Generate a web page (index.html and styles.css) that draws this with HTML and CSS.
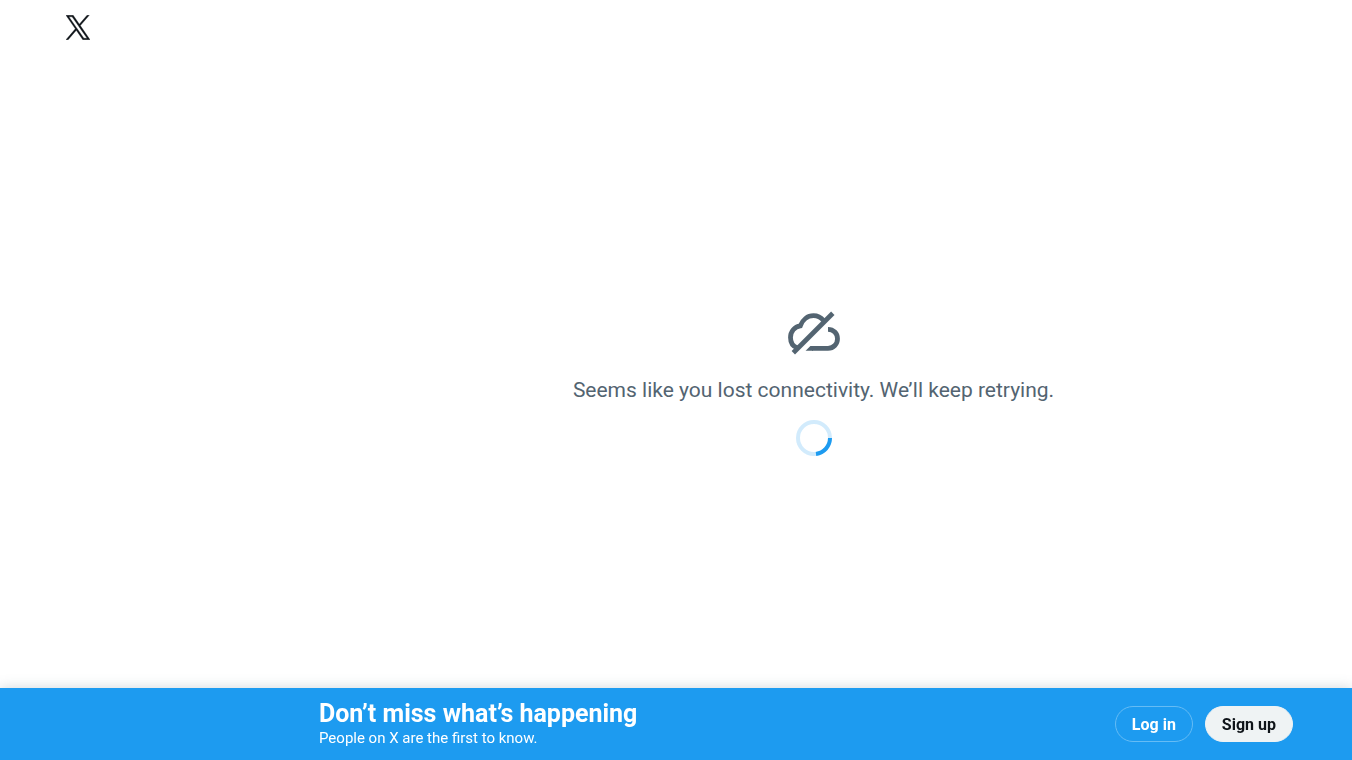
FILE: index.html
```html
<!DOCTYPE html>
<html lang="en">
<head>
    <meta charset="UTF-8">
    <meta name="viewport" content="width=device-width, initial-scale=1.0">
    <title>X</title>
    <link rel="stylesheet" href="styles.css">
</head>
<body>

<div class="layout">
    <header class="sidebar">
        <a href="/" class="logo" aria-label="X">
            <svg width="24" height="25" viewBox="0 0 1200 1227" aria-hidden="true">
                <path d="M714.163 519.284L1160.89 0H1055.03L667.137 450.887L357.328 0H0L468.492 681.821L0 1226.37H105.866L515.491 750.218L842.672 1226.37H1200L714.137 519.284H714.163ZM569.165 687.828L521.697 619.934L144.011 79.6944H306.615L611.412 515.685L658.88 583.579L1055.08 1150.3H892.476L569.165 687.854V687.828Z"/>
            </svg>
        </a>
    </header>

    <main class="offline">
        <svg class="cloud" width="60" height="60" viewBox="0 0 60 60" aria-hidden="true">
            <path class="cloud-line" d="M13.500 44C9 42.500 6.500 38.500 6.500 33.500C6.500 27.500 10.500 22.800 16.300 21.900C18.500 15.800 23.500 11.700 29.500 11.700C33.500 11.700 37 13.500 39.500 16.500"/>
            <path class="cloud-line" d="M44 25.300C49.500 25.300 53.500 29.500 53.500 34.700C53.500 40 49.500 44.300 44 44.300H28"/>
            <path class="cloud-end" d="M26.400 41.900H29V46.700H21.600Z"/>
            <path class="cloud-line" d="M9.300 48.800L48.800 9.300"/>
        </svg>
        <p class="message">Seems like you lost connectivity. We’ll keep retrying.</p>
        <svg class="spinner" width="36" height="36" viewBox="0 0 36 36" role="progressbar" aria-label="Loading">
            <circle class="track" cx="18" cy="18" r="16"/>
            <path class="arc" d="M34 18A16 16 0 0 1 20 33.900"/>
        </svg>
    </main>
</div>

<div class="bottom-bar">
    <div class="pitch">
        <h2>Don’t miss what’s happening</h2>
        <p>People on X are the first to know.</p>
    </div>
    <div class="actions">
        <button type="button" class="login">Log in</button>
        <button type="button" class="signup">Sign up</button>
    </div>
</div>

</body>
</html>
```
FILE: styles.css
```css
* {
    box-sizing: border-box;
}
body {
    margin: 0;
    background-color: #fff;
    color: #0f1419;
    font-family: Roboto, "Liberation Sans", sans-serif;
}
h2, p {
    margin: 0;
}
svg {
    display: block;
}
.layout {
    display: flex;
    min-height: 100vh;
}
.sidebar {
    width: 275px;
    padding: 2px 52px;
}
.logo {
    display: flex;
    justify-content: center;
    align-items: center;
    width: 52px;
    height: 51px;
    fill: #0f1419;
    stroke: #0f1419;
    stroke-width: 20;
}
/* Centered notice shown while offline */
.offline {
    flex: 1;
    display: flex;
    flex-direction: column;
    justify-content: center;
    align-items: center;
}
.cloud-line {
    fill: none;
    stroke: #536471;
    stroke-width: 4.8;
}
.cloud-end {
    fill: #536471;
}
.message {
    margin: 12px 0 16px;
    color: #536471;
    font-size: 21px;
    line-height: 28px;
}
.spinner {
    fill: none;
    stroke: #1d9bf0;
    stroke-width: 4;
}
.track {
    opacity: 0.2;
}
/* Stays on top of the page while scrolling */
.bottom-bar {
    position: fixed;
    bottom: 0;
    left: 0;
    right: 0;
    display: flex;
    justify-content: space-between;
    align-items: center;
    padding: 12px 59px 12px 319px;
    background-color: #1d9bf0;
    color: #fff;
    box-shadow: 0 0 12px rgba(101, 119, 134, 0.3);
}
.pitch h2 {
    font-size: 25px;
    line-height: 28px;
    font-weight: 700;
}
.pitch p {
    font-size: 15px;
    line-height: 20px;
}
.actions {
    display: flex;
    gap: 12px;
}
.actions button {
    height: 36px;
    padding: 0 16px;
    border: 1px solid #65bcf5;
    border-radius: 18px;
    background-color: transparent;
    color: #fff;
    font-family: inherit;
    font-size: 16px;
    font-weight: 700;
    cursor: pointer;
}
.actions .signup {
    border-color: #eff3f4;
    background-color: #eff3f4;
    color: #0f1419;
}
```
